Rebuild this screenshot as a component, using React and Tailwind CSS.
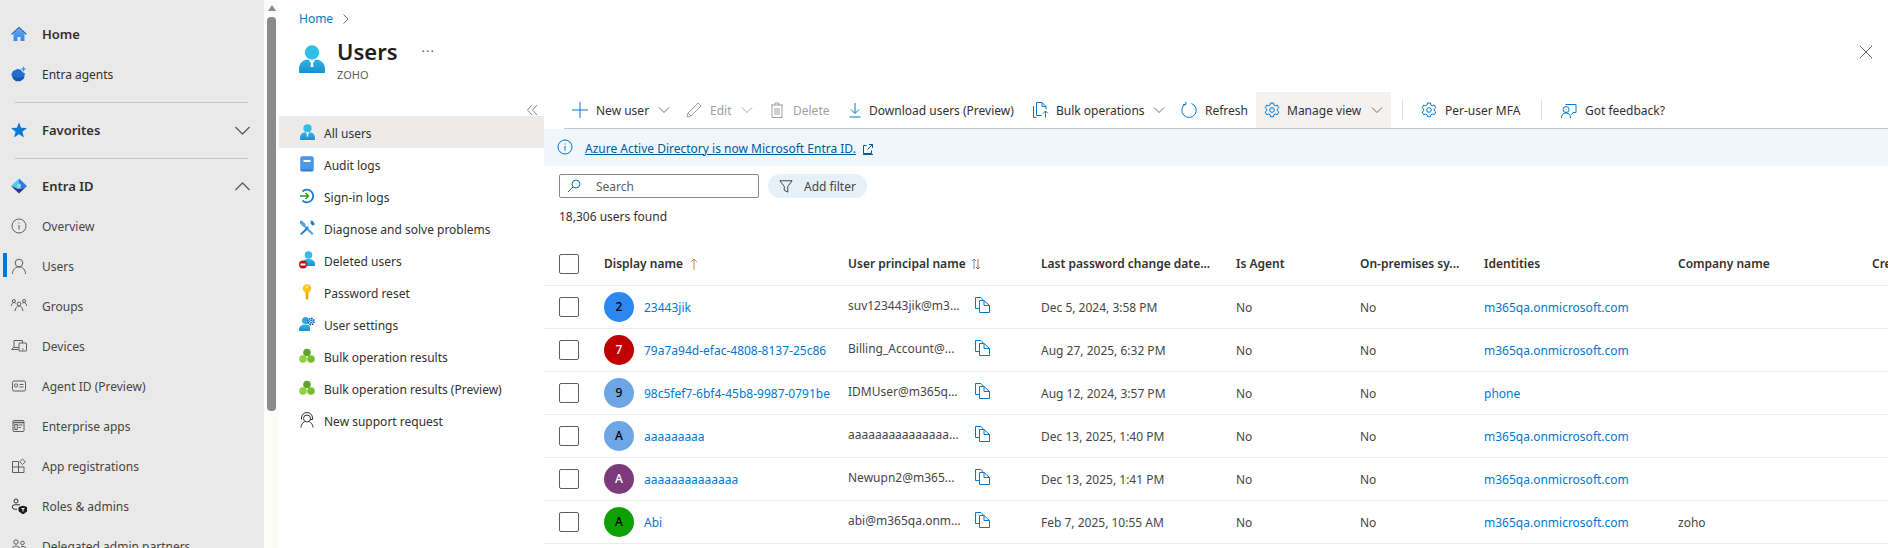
const LINK = "text-[#0078d4]"
const T = "translate-y-[1px]"

/* ================= SHARED GRADIENTS ================= */
function Defs() {
  return (
    <svg className="block h-0 w-0">
      <defs>
        <linearGradient id="userBody" x1="0" y1="0" x2="0" y2="1">
          <stop offset="0" stopColor="#2fb5e4" />
          <stop offset="1" stopColor="#1b8fd2" />
        </linearGradient>
        <linearGradient id="homeBody" x1="0" y1="0" x2="0" y2="1">
          <stop offset="0" stopColor="#5ea0ef" />
          <stop offset="1" stopColor="#2e8cf0" />
        </linearGradient>
      </defs>
    </svg>
  )
}

/* ================= ICONS ================= */
function Line({ size = 16, children, color = "#605e5c", className = "" }) {
  return (
    <svg width={size} height={size} viewBox="0 0 16 16" fill="none" stroke={color} strokeWidth="1" className={`shrink-0 ${className}`}>
      {children}
    </svg>
  )
}

function Chevron({ up = false, size = 12, color = "#605e5c" }) {
  return (
    <svg width={size} height={size} viewBox="0 0 12 12" fill="none" stroke={color} strokeWidth="0.9" className="shrink-0">
      <path d={up ? "M1 8.500 6 3.500l5 5" : "M1 3.500 6 8.500l5-5"} />
    </svg>
  )
}

const HomeIcon = () => (
  <svg width="16" height="16" viewBox="0 0 16 16" className="shrink-0">
    <path d="M2.500 7.500 8 3l5.500 4.500V15h-4v-4h-3v4h-4z" fill="url(#homeBody)" />
    <path d="M0 8 8 .8 16 8l-1 .8L8 2.600 1 8.800z" fill="#1a63b0" />
  </svg>
)
const AgentsIcon = () => (
  <svg width="16" height="16" viewBox="0 0 16 16" className="shrink-0">
    <path d="M6.500 3a5.500 5.500 0 0 1 5 3l2.500 1.500-1 5-3.500 2.500h-4L2 13 .3 8.500 2 5z" fill="#1f6fd0" />
    <path d="M2 10c2 2 7 2.500 11 .5l-1 2.500-3 2.200H5L3 13.500z" fill="#1557a8" />
    <path d="M12.500 0l.8 2.200 2.200.8-2.200.8-.8 2.200-.8-2.200L9.500 3l2.200-.8z" fill="#3a96e8" />
  </svg>
)
const StarIcon = () => (
  <svg width="16" height="16" viewBox="0 0 16 16" className="shrink-0">
    <path d="M8 .2 10.100 5.800 16 6.100l-4.600 3.700 1.600 5.800L8 12.300l-5 3.300 1.600-5.800L0 6.100l5.900-.3z" fill="#0f78d4" />
  </svg>
)
const EntraIcon = () => (
  <svg width="16" height="16" viewBox="0 0 16 16" className="shrink-0">
    <path d="M8 .5 0 8l4 3 4-2z" fill="#50c8f0" />
    <path d="M8 .5 16 8l-4 3-4-2z" fill="#2a7fd8" />
    <path d="M0 8l8 7.500L16 8l-4 2.500H6z" fill="#24398f" />
    <circle cx="8" cy="7.500" r="2" fill="#8fd8f5" />
  </svg>
)
const InfoIcon = ({ color = "#605e5c", size = 16, className = "" }) => (
  <Line color={color} size={size} className={className}>
    <circle cx="8" cy="8" r="7" />
    <path d="M8 7v4.500M8 4.500v1" />
  </Line>
)
const UserLine = () => (
  <Line>
    <circle cx="8" cy="5" r="3.800" />
    <path d="M1.500 16c0-4 2.500-7 6.500-7s6.500 3 6.500 7" />
  </Line>
)
const GroupsIcon = () => (
  <Line>
    <circle cx="8" cy="6" r="1.900" />
    <circle cx="2.900" cy="3" r="1.500" />
    <circle cx="13.100" cy="3" r="1.500" />
    <path d="M4 13c.3-3 2-5 4-5s3.700 2 4 5M.3 8c.3-2 1.200-3.500 2.700-3.500.7 0 1.300.3 1.700.8M15.700 8c-.3-2-1.200-3.500-2.700-3.500-.7 0-1.300.3-1.700.8" />
  </Line>
)
const DevicesIcon = () => (
  <Line>
    <path d="M3 9.500V2.500h8.500V5M0.500 11.500l2-2h5M0.500 11.500h7" />
    <rect x="8" y="5" width="7.500" height="8" rx=".5" />
    <path d="M11 11h1.500" />
  </Line>
)
const AgentIdIcon = () => (
  <Line>
    <rect x="1.500" y="3" width="13" height="10" rx="1.500" />
    <rect x="3.500" y="6" width="3" height="3" rx="1" />
    <path d="M8.500 6.500h4M8.500 9h4" />
  </Line>
)
const EnterpriseIcon = () => (
  <Line>
    <rect x="2" y="2.500" width="11" height="11" rx="1" />
    <path d="M2 4.500h11" strokeWidth="1.500" />
    <rect x="3.800" y="6.500" width="2.500" height="5" />
    <path d="M7.500 7h4M7.500 9.500h2.500" />
  </Line>
)
const AppRegIcon = () => (
  <Line>
    <path d="M1.500 3.500h6v5.500h5.500v5.500H1.500zM1.500 9h6v5.500" />
    <path d="M11.500 1l2.800 2.800-2.800 2.800-2.800-2.800z" />
  </Line>
)
const RolesIcon = () => (
  <svg width="16" height="16" viewBox="0 0 16 16" fill="none" stroke="#323130" className="shrink-0">
    <circle cx="5" cy="3" r="2" />
    <path d="M9 6.800H3.500a2.200 2.200 0 0 0 0 4.400H6" />
    <path d="M8 9.500l4-1.300 4 1.300v3.500l-4 3-4-3z" fill="#1b1a19" stroke="#1b1a19" />
    <path d="M10.500 10.500h3M12 10.500v3" stroke="#fff" />
  </svg>
)
const DelegatedIcon = () => (
  <Line>
    <circle cx="5" cy="4" r="2.200" />
    <circle cx="11.500" cy="5" r="1.800" />
    <path d="M1 12c0-2.500 1.500-4 4-4s4 1.500 4 4zM10 8.500h2c2 0 3 1 3 3v.5h-4" />
  </Line>
)

const UserBlue = ({ w = 15, h = 16 }) => (
  <svg width={w} height={h} viewBox="0 0 26 28" className="shrink-0">
    <circle cx="13" cy="7.500" r="7.200" fill="#2fbfe6" />
    <path d="M0 28v-4c0-6 4-9 8.500-9.500L13 16l4.500-1.500C22 15 26 18 26 24v4z" fill="url(#userBody)" />
    <path d="M10 15.500h6l-2 2.500 .5 4h-3l.5-4z" fill="#fff" />
  </svg>
)
const BookIcon = () => (
  <svg width="14" height="16" viewBox="0 0 14 16" className="shrink-0">
    <rect x=".5" y=".5" width="13" height="15" rx="1.500" fill="#2a7ed4" />
    <path d="M.5 2A1.500 1.500 0 0 1 2 .5h10A1.500 1.500 0 0 1 13.500 2v11.500H2A1.500 1.500 0 0 0 .5 15z" fill="#4a98e6" />
    <rect x="3.500" y="4" width="7" height="2" fill="#fff" />
  </svg>
)
const SignInIcon = () => (
  <svg width="16" height="16" viewBox="0 0 16 16" fill="none" className="shrink-0">
    <path d="M3.500 3.500a6.300 6.300 0 1 1 0 9" stroke="#1b7cd3" strokeWidth="1.800" />
    <path d="M1 8h8M6.500 5l3 3-3 3" stroke="#1aa01a" strokeWidth="1.400" />
  </svg>
)
const ToolIcon = () => (
  <svg width="16" height="16" viewBox="0 0 16 16" className="shrink-0">
    <path d="M1 1l2-.5 3.500 3.500v1.500l8 8-1.500 1.500-8-8H4.500L1 3.500z" fill="#50a8e0" />
    <path d="M11 .5a4 4 0 0 1 4.500 4.500l-2 .5-2-2 .5-2.500zM9.500 5.500L7 8 1.500 13.500a1 1 0 0 0 1 1.500L9 9z" fill="#1b7cd3" />
  </svg>
)
const DeletedIcon = () => (
  <svg width="17" height="18" viewBox="0 0 17 18" className="shrink-0">
    <circle cx="9.500" cy="4" r="3.800" fill="#2fbfe6" />
    <path d="M3 15v-2c0-3 3-5 6.500-5s6.500 2 6.500 5v2z" fill="url(#userBody)" />
    <circle cx="4" cy="13.500" r="4" fill="#c80c0c" />
    <rect x="1.500" y="12.500" width="5" height="2" fill="#fff" />
  </svg>
)
const KeyIcon = () => (
  <svg width="12" height="16" viewBox="0 0 12 16" className="shrink-0">
    <circle cx="6" cy="4.500" r="4.200" fill="#ffc31f" />
    <path d="M4.700 8h2.600v6.500L6 16l-1.300-1.500z" fill="#f5a800" />
    <circle cx="6" cy="3" r=".9" fill="#fff" />
  </svg>
)
const UserGearIcon = () => (
  <svg width="16" height="16" viewBox="0 0 16 16" className="shrink-0">
    <circle cx="6.500" cy="4.500" r="3.500" fill="#2fa8e6" />
    <path d="M0 15v-1.500C0 10.500 3 8.500 6.500 8.500S11 10 11 12v3z" fill="url(#userBody)" />
    <circle cx="12" cy="5.500" r="3" fill="#fff" stroke="#0f6cc4" strokeWidth="1.800" strokeDasharray="1.600 .7" />
    <circle cx="12" cy="5.500" r="1.700" fill="#0f6cc4" />
    <circle cx="12" cy="5.500" r=".8" fill="#fff" />
  </svg>
)
const BulkIcon = () => (
  <svg width="16" height="16" viewBox="0 0 16 16" className="shrink-0">
    <circle cx="8" cy="4.500" r="3.800" fill="#5ea62a" />
    <circle cx="4" cy="11" r="3.800" fill="#8cd140" />
    <circle cx="12" cy="11" r="3.800" fill="#76bc2d" />
  </svg>
)
const SupportIcon = () => (
  <svg width="14" height="16" viewBox="0 0 14 16" fill="none" stroke="#323130" className="shrink-0">
    <circle cx="7" cy="6.500" r="3.500" />
    <path d="M1.500 7.500V6a5.500 5.500 0 0 1 11 0v1.500H10M1 15.500c0-3 2-5 3.500-5.500M13 15.500c0-3-2-5-3.500-5.500" />
  </svg>
)

const CopyIcon = () => (
  <svg width="15" height="16" viewBox="0 0 15 16" fill="none" stroke="#0078d4" className="shrink-0">
    <path d="M.5 .5H6l2.500 3" />
    <path d="M.5 .5v11H4" />
    <path d="M4.500 3.500H9l5.500 5v7h-10z" fill="#fff" />
    <path d="M9 3.500v5h5.500" />
  </svg>
)

function GearIcon() {
  return (
    <svg width="16" height="16" viewBox="0 0 16 16" fill="none" stroke="#0078d4" className="shrink-0">
      <path d="M6.500 1h3l.4 2 1.500.8 1.900-.7 1.500 2.600-1.500 1.300v1.800l1.500 1.300-1.500 2.600-1.900-.7-1.500.8-.4 2h-3l-.4-2-1.500-.8-1.900.7-1.500-2.600 1.500-1.300V7L1.200 5.700l1.500-2.600 1.900.7L6.100 3z" />
      <circle cx="8" cy="8" r="2.300" />
    </svg>
  )
}

/* ================= DATA ================= */
const navTop = [
  { label: "Overview", icon: <InfoIcon /> },
  { label: "Users", icon: <UserLine />, active: true },
  { label: "Groups", icon: <GroupsIcon /> },
  { label: "Devices", icon: <DevicesIcon /> },
  { label: "Agent ID (Preview)", icon: <AgentIdIcon /> },
  { label: "Enterprise apps", icon: <EnterpriseIcon /> },
  { label: "App registrations", icon: <AppRegIcon /> },
  { label: "Roles & admins", icon: <RolesIcon /> },
  { label: "Delegated admin partners", icon: <DelegatedIcon /> },
]

const menu = [
  { label: "All users", icon: <UserBlue />, active: true },
  { label: "Audit logs", icon: <BookIcon /> },
  { label: "Sign-in logs", icon: <SignInIcon /> },
  { label: "Diagnose and solve problems", icon: <ToolIcon /> },
  { label: "Deleted users", icon: <DeletedIcon /> },
  { label: "Password reset", icon: <KeyIcon /> },
  { label: "User settings", icon: <UserGearIcon /> },
  { label: "Bulk operation results", icon: <BulkIcon /> },
  { label: "Bulk operation results (Preview)", icon: <BulkIcon /> },
  { label: "New support request", icon: <SupportIcon /> },
]

const usuarios = [
  { ini: "2", cor: "bg-[#2b88f0] text-black", nome: "23443jik", upn: "suv123443jik@m3...", data: "Dec 5, 2024, 3:58 PM", ident: "m365qa.onmicrosoft.com", emp: "" },
  { ini: "7", cor: "bg-[#c00000] text-white", nome: "79a7a94d-efac-4808-8137-25c86", upn: "Billing_Account@...", data: "Aug 27, 2025, 6:32 PM", ident: "m365qa.onmicrosoft.com", emp: "" },
  { ini: "9", cor: "bg-[#6ca6e6] text-black", nome: "98c5fef7-6bf4-45b8-9987-0791be", upn: "IDMUser@m365q...", data: "Aug 12, 2024, 3:57 PM", ident: "phone", emp: "" },
  { ini: "A", cor: "bg-[#6ca6e6] text-black", nome: "aaaaaaaaa", upn: "aaaaaaaaaaaaaaa...", data: "Dec 13, 2025, 1:40 PM", ident: "m365qa.onmicrosoft.com", emp: "" },
  { ini: "A", cor: "bg-[#7c3a7c] text-white", nome: "aaaaaaaaaaaaaa", upn: "Newupn2@m365...", data: "Dec 13, 2025, 1:41 PM", ident: "m365qa.onmicrosoft.com", emp: "" },
  { ini: "A", cor: "bg-[#0ca000] text-black", nome: "Abi", upn: "abi@m365qa.onm...", data: "Feb 7, 2025, 10:55 AM", ident: "m365qa.onmicrosoft.com", emp: "zoho" },
]

const GRID = "grid grid-cols-[60px_244px_193px_195px_124px_124px_194px_194px_100px] items-center w-max min-w-full border-b border-[#edebe9]"

function Checkbox() {
  return <div className="ml-[15px] h-5 w-5 rounded-[2px] border border-[#605e5c] bg-white" />
}

function ToolBtn({ width, icon, label, chevron, disabled, hover, gap = "gap-2" }) {
  return (
    <div className={`flex h-full items-center px-2 shrink-0 ${gap} ${width} ${hover ? "bg-[#f3f2f1]" : ""} ${disabled ? "text-[#a19f9d]" : "text-[#323130]"}`}>
      {icon}
      <span className={`whitespace-nowrap ${T}`}>{label}</span>
      {chevron && <span className="ml-auto"><Chevron color={disabled ? "#a19f9d" : "#605e5c"} /></span>}
    </div>
  )
}

/* ================= RENDER ================= */
export default function App() {
  return (
    <div className="flex h-[548px] w-[1888px] overflow-hidden bg-white font-['Noto_Sans',sans-serif] text-[12px] text-[#323130]">
      {/* NAV ESQUERDA */}
      <aside className="w-[264px] shrink-0 bg-[#e9e9e9] pt-[14px] pl-[11px]">
        <Defs />
        <div className="flex h-10 items-center gap-[15px] text-[13px] font-semibold"><HomeIcon /><span className={T}>Home</span></div>
        <div className="flex h-10 items-center gap-[15px]"><AgentsIcon /><span className={T}>Entra agents</span></div>
        <div className="mt-[8px] mb-[7px] ml-[4px] mr-[16px] h-px bg-[#c8c6c4]" />
        <div className="flex h-10 items-center gap-[15px] pr-[13px] text-[13px] font-semibold">
          <StarIcon /><span className={T}>Favorites</span><span className="ml-auto"><Chevron size={17} /></span>
        </div>
        <div className="mt-[8px] mb-[7px] ml-[4px] mr-[16px] h-px bg-[#c8c6c4]" />
        <div className="flex h-10 items-center gap-[15px] pr-[13px] text-[13px] font-semibold">
          <EntraIcon /><span className={T}>Entra ID</span><span className="ml-auto"><Chevron up size={17} /></span>
        </div>
        {navTop.map(n => (
          <div key={n.label} className="relative flex h-10 items-center gap-[15px] text-[#484644]">
            {n.active && <span className="absolute left-[-8px] top-[7px] h-6 w-1 bg-[#0078d4]" />}
            {n.icon}<span className={T}>{n.label}</span>
          </div>
        ))}
      </aside>

      {/* SCROLLBAR */}
      <div className="w-[15px] shrink-0 bg-[#fbfbfa] px-[3px] pt-[5px]">
        <div className="mx-auto h-0 w-0 border-x-[4.500px] border-b-[6px] border-x-transparent border-b-[#8b8b8b]" />
        <div className="mt-[6px] h-[394px] w-[9px] rounded-[4px] bg-[#8b8b8b]" />
      </div>

      {/* BLADE */}
      <main className="flex min-w-0 flex-1 flex-col">
        <header className="relative h-[92px] shrink-0 pl-5">
          <div className="flex h-9 items-center gap-[8px] pt-[1px] text-[#0078d4]">
            Home
            <svg width="10" height="10" viewBox="0 0 10 10" fill="none" stroke="#605e5c" strokeWidth=".9"><path d="M2.500 .5 7 5 2.500 9.500" /></svg>
          </div>
          <div className="flex gap-[12px] pt-[9px]">
            <UserBlue w={26} h={28} />
            <div className="-mt-[9px]">
              <div className="flex items-center">
                <h1 className="text-[22px] font-semibold leading-[30px] text-[#201f1e]">Users</h1>
                <span className="ml-[24px] text-[13px] leading-none tracking-[1px] text-[#605e5c]">···</span>
              </div>
              <div className="pt-[1px] text-[11px] leading-[16px] text-[#605e5c]">ZOHO</div>
            </div>
          </div>
          <svg width="14" height="14" viewBox="0 0 14 14" stroke="#605e5c" className="absolute right-[15px] top-[45px]">
            <path d="M1 1l12 12M13 1 1 13" />
          </svg>
        </header>

        <div className="flex min-h-0 flex-1">
          {/* MENU */}
          <nav className="relative w-[265px] shrink-0 pt-[24px]">
            <svg width="12" height="12" viewBox="0 0 12 12" fill="none" stroke="#8a8886" className="absolute right-[6px] top-[12px]">
              <path d="M6 1 1.500 6 6 11M11 1 6.500 6 11 11" />
            </svg>
            {menu.map(m => (
              <div key={m.label} className={`flex h-8 items-center pl-[20px] ${m.active ? "bg-[#edebe9]" : ""}`}>
                <span className="flex w-[16px] shrink-0 justify-center">{m.icon}</span>
                <span className="ml-[9px] translate-y-[2px]">{m.label}</span>
              </div>
            ))}
          </nav>

          {/* CONTEUDO */}
          <section className="min-w-0 flex-1 overflow-hidden">
            <div className="ml-[20px] flex h-[37px] items-center border-b border-[#c8c6c4]">
              <ToolBtn width="w-[114px]" label="New user" chevron icon={
                <Line color="#0078d4"><path d="M8 0v16M0 8h16" /></Line>
              } />
              <ToolBtn width="w-[83px]" label="Edit" chevron disabled icon={
                <Line color="#a19f9d"><path d="M1 15l1-4L12 1l3 3L5 14zM2 11l3 3" /></Line>
              } />
              <ToolBtn width="w-[78px]" label="Delete" disabled icon={
                <Line color="#a19f9d"><path d="M2 3h12M6 3V1h4v2M3 3v12.500h10V3M6 6v7M8 6v7M10 6v7" /></Line>
              } />
              <ToolBtn width="w-[186px]" label="Download users (Preview)" gap="gap-[6px]" icon={
                <Line color="#0078d4"><path d="M8 1v10M4 7.500 8 11.500l4-4M2.500 15h11" /></Line>
              } />
              <ToolBtn width="w-[148px]" label="Bulk operations" gap="gap-[7px]" chevron icon={
                <Line color="#0078d4"><path d="M3.500 15.500h-3V4M3.500 .5v13h5M3.500 .5H9L13 4.500V7M9 .5v4h4M12.500 15.500V9M10 11.500 12.500 9l2.500 2.500" /></Line>
              } />
              <ToolBtn width="w-[83px]" label="Refresh" icon={
                <Line color="#0078d4"><path d="M4.500 2a7.200 7.200 0 1 0 6-.5M4.800 0v2.600H2" /></Line>
              } />
              <ToolBtn width="w-[135px]" label="Manage view" gap="gap-[7px]" chevron hover icon={<GearIcon />} />
              <div className="ml-[11px] h-5 w-px bg-[#e1dfdd]" />
              <div className="ml-[10px] h-full"><ToolBtn width="w-[127px]" label="Per-user MFA" icon={<GearIcon />} /></div>
              <div className="ml-[1px] h-5 w-px bg-[#e1dfdd]" />
              <div className="ml-[11px] h-full"><ToolBtn width="w-[130px]" label="Got feedback?" icon={
                <Line color="#0078d4"><path d="M4.500 2.500H15v8h-3l-1.500 2M.5 16c0-3 1.500-5 4.500-5s4.500 2 4.500 5" /><circle cx="5" cy="7.500" r="3" /></Line>
              } /></div>
            </div>

            <div className="flex h-[37px] items-center bg-[#eff6fc] pl-[13px]">
              <InfoIcon color="#0078d4" className="-translate-y-[1px]" />
              <a className={`ml-[12px] whitespace-nowrap text-[#005a9e] underline ${T}`}>Azure Active Directory is now Microsoft Entra ID.</a>
              <svg width="12" height="12" viewBox="0 0 12 12" fill="none" stroke="#005a9e" className={`ml-[6px] ${T}`}>
                <path d="M7 1.500h3.500V5M10.500 1.500 5.500 6.500M4.500 2.500H1.500v8h8v-3M1 11.500h10" />
              </svg>
            </div>

            <div className="mt-2 ml-[15px] flex h-6 items-center gap-[9px]">
              <div className="flex h-6 w-[200px] items-center rounded-[2px] border border-[#8a8886] pl-[7px] text-[#605e5c]">
                <svg width="14" height="14" viewBox="0 0 14 14" fill="none" stroke="#0078d4" className="shrink-0">
                  <circle cx="9" cy="5" r="4" /><path d="M6 8 1 13" />
                </svg>
                <span className={`ml-[15px] ${T}`}>Search</span>
              </div>
              <div className="flex h-6 w-[99px] items-center rounded-full bg-[#e5f0f9] pl-[11px] text-[#484644]">
                <Line size={14} color="#323130"><path d="M1 2h14L10 8.500V15l-4-2V8.500z" /></Line>
                <span className={`ml-[11px] whitespace-nowrap ${T}`}>Add filter</span>
              </div>
            </div>

            <div className="ml-[15px] mt-[10px] h-[18px] leading-[18px]">18,306 users found</div>

            {/* TABELA */}
            <div className={`${GRID} mt-[17px] h-[43px] font-semibold text-[#323130]`}>
              <Checkbox />
              <div className="flex items-center gap-[6px]">
                Display name
                <svg width="10" height="12" viewBox="0 0 10 12" fill="none" stroke="#d08a40"><path d="M5 12V1M2 4l3-3 3 3" /></svg>
              </div>
              <div className="flex items-center gap-[5px]">
                User principal name
                <svg width="10" height="12" viewBox="0 0 10 12" fill="none" strokeWidth=".9">
                  <path d="M3 11V1M1 3l2-2 2 2" stroke="#5a7fa8" /><path d="M7 1v10M5 9l2 2 2-2" stroke="#b0524a" />
                </svg>
              </div>
              <div>Last password change date...</div>
              <div>Is Agent</div>
              <div>On-premises sy...</div>
              <div>Identities</div>
              <div>Company name</div>
              <div>Created</div>
            </div>

            {usuarios.map((u, i) => (
              <div key={i} className={`${GRID} h-[43px] text-[#484644]`}>
                <Checkbox />
                <div className="flex min-w-0 items-center pr-[12px]">
                  <span className={`flex h-[30px] w-[30px] shrink-0 items-center justify-center rounded-full text-[12px] font-medium ${u.cor}`}>{u.ini}</span>
                  <span className={`ml-[10px] overflow-hidden whitespace-nowrap ${LINK} ${T}`}>{u.nome}</span>
                </div>
                <div className="flex min-w-0 items-center -translate-y-[1px]">
                  <span className="w-[115px] whitespace-nowrap">{u.upn}</span>
                  <span className="ml-[12px] -translate-y-[1px]"><CopyIcon /></span>
                </div>
                <div className={T}>{u.data}</div>
                <div className={T}>No</div>
                <div className={T}>No</div>
                <div className={`${LINK} ${T}`}>{u.ident}</div>
                <div className={T}>{u.emp}</div>
                <div />
              </div>
            ))}
          </section>
        </div>
      </main>
    </div>
  )
}
